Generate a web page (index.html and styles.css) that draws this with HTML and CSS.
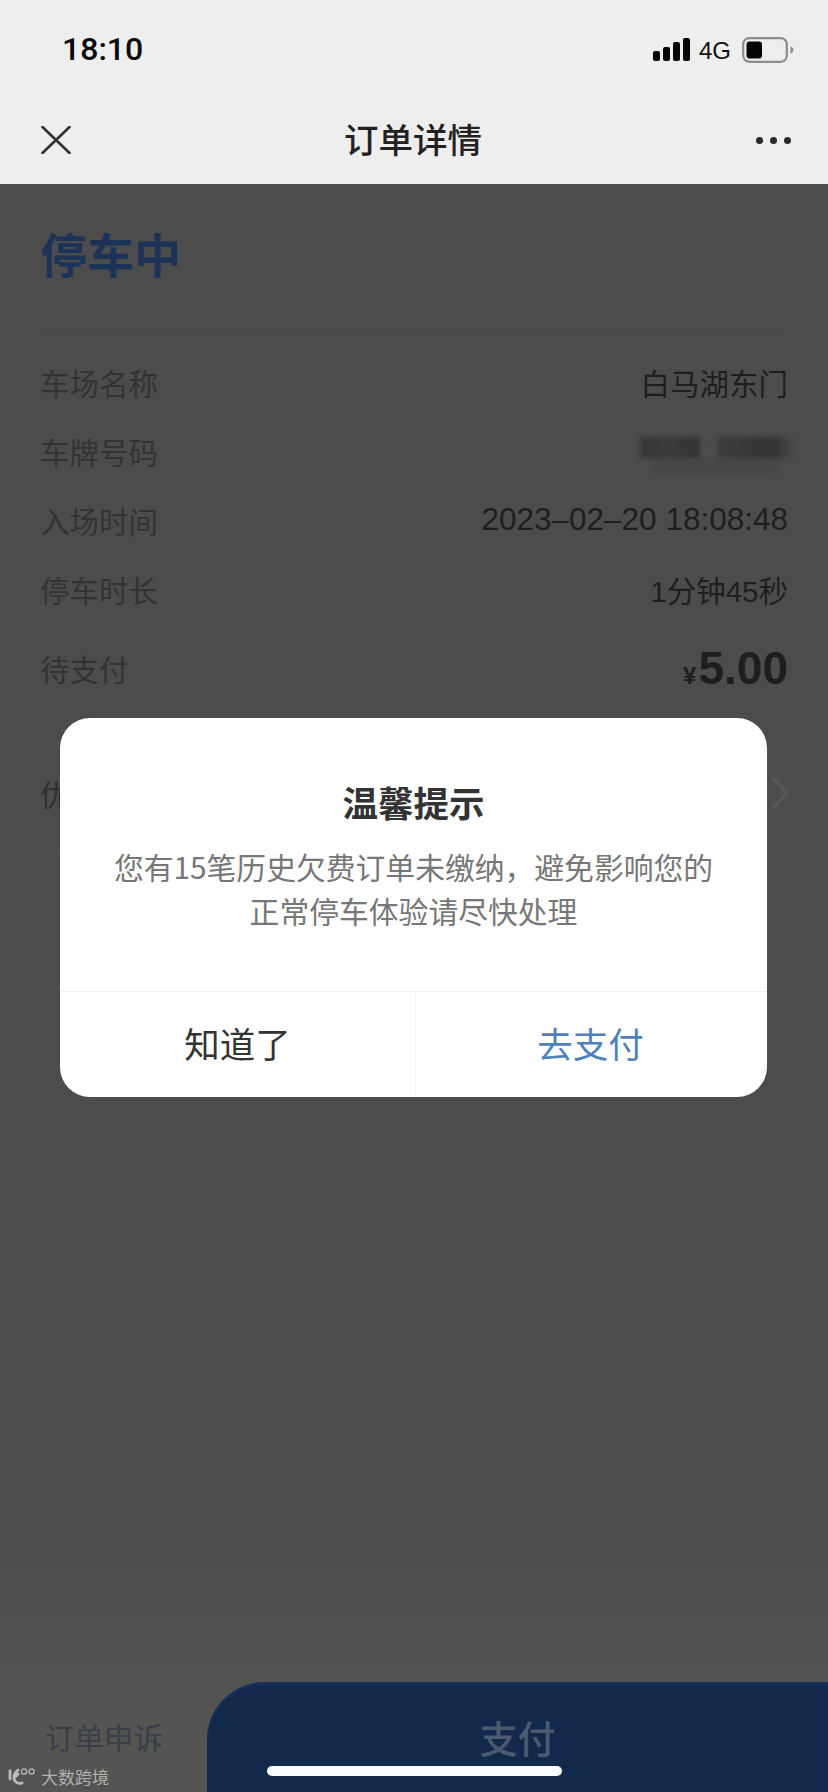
FILE: index.html
```html
<!DOCTYPE html>
<html lang="zh-CN">
<head>
<meta charset="utf-8">
<title>订单详情</title>
<link rel="stylesheet" href="styles.css">
</head>
<body>
<div class="page">
  <header class="chrome">
    <div class="status">
      <span class="time">18:10</span>
      <div class="status-right">
        <svg class="signal" width="37" height="23" viewBox="0 0 37 23" aria-hidden="true">
          <rect x="0" y="13" width="7" height="10" rx="2"/>
          <rect x="10" y="9" width="7" height="14" rx="2"/>
          <rect x="20" y="4" width="7" height="19" rx="2"/>
          <rect x="30" y="0" width="7" height="23" rx="2"/>
        </svg>
        <span class="net">4G</span>
        <svg class="battery" width="52" height="26" viewBox="0 0 52 26" aria-hidden="true">
          <rect x="1.200" y="1.200" width="43.600" height="23.600" rx="6" fill="none" stroke="#8c8c8c" stroke-width="2.200"/>
          <rect x="4.500" y="4.500" width="15.500" height="17" rx="3" fill="#050505"/>
          <path d="M48.500 9.500c2.200.8 3 2 3 3.500s-.8 2.700-3 3.500z" fill="#8c8c8c"/>
        </svg>
      </div>
    </div>
    <nav class="nav">
      <svg class="close" width="30" height="28" viewBox="0 0 30 28" aria-hidden="true">
        <path d="M1.500 1 28.500 27M28.500 1 1.500 27" fill="none" stroke="#333" stroke-width="2.600" stroke-linecap="round"/>
      </svg>
      <h1 class="nav-title">订单详情</h1>
      <div class="dots"><i></i><i></i><i></i></div>
    </nav>
  </header>

  <main class="content">
    <section class="summary">
      <h2 class="state">停车中</h2>
    </section>
    <dl class="rows">
      <div class="row"><dt>车场名称</dt><dd>白马湖东门</dd></div>
      <div class="row"><dt>车牌号码</dt><dd class="plate"><span class="plate-a"></span><span class="plate-b"></span></dd></div>
      <div class="row"><dt>入场时间</dt><dd class="date">2023–02–20 18:08:48</dd></div>
      <div class="row"><dt>停车时长</dt><dd class="num">1分钟45秒</dd></div>
      <div class="row row-due"><dt>待支付</dt><dd class="amount"><small>¥</small>5.00</dd></div>
    </dl>
    <div class="coupon">
      <span>优惠券</span>
      <svg width="20" height="36" viewBox="0 0 20 36" aria-hidden="true"><path d="M2 2 17 18 2 34" fill="none" stroke="#575757" stroke-width="3.500"/></svg>
    </div>
  </main>

  <footer class="footer">
    <span class="appeal">订单申诉</span>
    <div class="pay">支付</div>
  </footer>

  <div class="home-bar"></div>

  <div class="watermark">
    <svg width="30" height="18" viewBox="0 0 30 18" aria-hidden="true">
      <path d="M2 3v8M10 2C6 5 5 10 7 13c1.500 2 4 3 7 2M7 9l3-3" fill="none" stroke="#bcbcbc" stroke-width="2.800" stroke-linecap="round"/>
      <circle cx="16" cy="3.500" r="2.600" fill="none" stroke="#bcbcbc" stroke-width="1.200"/>
      <circle cx="23.500" cy="3.500" r="2.600" fill="none" stroke="#bcbcbc" stroke-width="1.200"/>
    </svg>
    <span>大数跨境</span>
  </div>

  <div class="dialog" role="dialog">
    <div class="dialog-body">
      <h3 class="dialog-title">温馨提示</h3>
      <p class="dialog-text">您有15笔历史欠费订单未缴纳，避免影响您的<br>正常停车体验请尽快处理</p>
    </div>
    <div class="dialog-actions">
      <button class="btn">知道了</button>
      <button class="btn btn-primary">去支付</button>
    </div>
  </div>
</div>
</body>
</html>
```

FILE: styles.css
```css
* { box-sizing: border-box; margin: 0; padding: 0; }
html, body { width: 828px; height: 1792px; overflow: hidden; }
body { font-family: "Noto Sans CJK SC", "Liberation Sans", sans-serif; background: #4d4d4d; }

.page { position: relative; width: 828px; height: 1792px; display: flex; flex-direction: column; overflow: hidden; background: linear-gradient(#4c4c4c 0, #4c4c4c 1500px, #545452 1720px); }

/* top chrome */
.chrome { height: 184px; background: #eeeeee; flex: none; display: flex; flex-direction: column; }
.status { height: 100px; padding: 34px 34px 0 62px; display: flex; justify-content: space-between; align-items: flex-start; }
.time { font-family: Roboto, "Liberation Sans", sans-serif; font-weight: 500; font-size: 32px; line-height: 30px; color: #0a0a0a; }
.status-right { display: flex; align-items: flex-start; margin-top: 3px; }
.signal { fill: #050505; margin-top: 1px; }
.net { font-family: "Liberation Sans", sans-serif; font-size: 24px; line-height: 24px; margin: 2px 11px 0 9px; color: #111; }
.nav { position: relative; height: 84px; padding: 0 37px 0 41px; display: flex; justify-content: space-between; align-items: flex-start; }
.close { margin-top: 26px; }
.nav-title { position: absolute; left: 0; right: 2px; top: 16px; text-align: center; font-weight: 500; font-size: 34.500px; line-height: 44px; color: #222; }
.dots { display: flex; gap: 7px; margin-top: 37px; }
.dots i { width: 7px; height: 7px; border-radius: 50%; background: #2a2a2a; }

/* dimmed page */
.content { flex: 1; padding: 0 40px; }
.summary { height: 146px; padding-top: 39px; border-bottom: 1px solid #484848; }
.state { font-size: 47px; line-height: 60px; font-weight: 700; color: #1c3358; }
.rows { padding-top: 17px; }
.row { display: flex; justify-content: space-between; align-items: center; height: 69px; font-size: 29.500px; color: #2f2f2f; }
.row dt { color: #333333; }
.row dd { color: #1e1e1e; }
.date { font-family: "Liberation Sans", "Noto Sans CJK SC", sans-serif; font-size: 31.500px; }
.num { font-family: "Liberation Sans", "Noto Sans CJK SC", sans-serif; }
.plate { position: relative; width: 160px; height: 44px; margin-right: -12px; filter: blur(2.500px); }
.plate::after { content: ""; position: absolute; left: 12px; top: 30px; width: 126px; height: 14px; background: #474747; }
.plate-a, .plate-b { position: absolute; top: 8px; height: 21px; }
.plate-a { left: 0; width: 60px; background: linear-gradient(90deg, #363636, #3a3a3a 50%, #333333); }
.plate-b { left: 78px; width: 76px; background: linear-gradient(90deg, #3c3c3c, #333333 75%, #4a4a4a); }
.row-due { height: 90px; }
.amount { font-family: "Liberation Sans", sans-serif; font-weight: 700; font-size: 46px; color: #141414; }
.amount small { font-size: 24px; margin-right: 2px; }
.coupon { display: flex; justify-content: space-between; align-items: center; height: 138px; padding-top: 23px; border-bottom: 1px solid #505050; font-size: 29.500px; color: #2f2f2f; }
.coupon svg { margin-right: -2px; }

/* footer */
.footer { height: 110px; flex: none; display: flex; align-items: stretch; }
.appeal { width: 207px; padding: 34px 0 0 45px; font-size: 29.500px; line-height: 40px; color: #3a3e48; white-space: nowrap; }
.pay { flex: 1; background: #13294b; box-shadow: inset 0 3px 3px -1px #1a3566; border-top-left-radius: 58px; text-align: center; padding-top: 30px; font-size: 38px; line-height: 50px; font-weight: 500; color: #4a5a70; }

.home-bar { position: absolute; left: 267px; top: 1766px; width: 295px; height: 10px; border-radius: 5px; background: #f8fcff; }

.watermark { position: absolute; left: 8px; top: 1765px; display: flex; align-items: center; gap: 3px; font-size: 17px; line-height: 24px; color: #b0b0b0; }

/* dialog */
.dialog { position: absolute; left: 60px; top: 718px; width: 707px; height: 379px; background: #ffffff; border-radius: 30px; display: flex; flex-direction: column; overflow: hidden; }
.dialog-body { flex: 1; text-align: center; padding-top: 60px; }
.dialog-title { font-size: 35.500px; line-height: 48px; font-weight: 700; color: #333333; }
.dialog-text { margin-top: 18px; font-size: 29.800px; line-height: 44px; color: #777777; white-space: nowrap; }
.dialog-actions { height: 106px; flex: none; display: flex; border-top: 1px solid #f0f0f0; }
.btn { flex: 1; border: 0; background: none; font-family: inherit; font-size: 35.500px; line-height: 48px; color: #333333; padding-bottom: 4px; }
.btn-primary { color: #4f82b8; border-left: 1px solid #f4f4f4; flex: 0 0 352px; padding-right: 2px; }
```
